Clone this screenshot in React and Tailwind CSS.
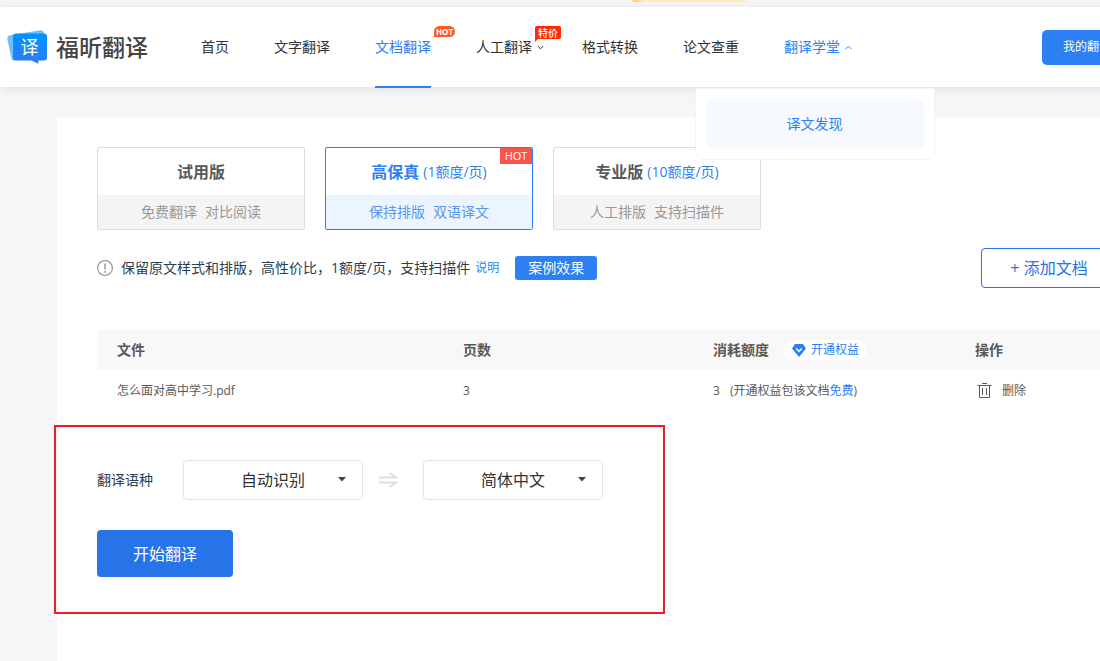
import { useState } from 'react';

const NAV = [
  { label: '首页' },
  { label: '文字翻译' },
  { label: '文档翻译', active: true, badge: 'hot' },
  { label: '人工翻译', arrow: 'down', badge: 'sale' },
  { label: '格式转换' },
  { label: '论文查重' },
  { label: '翻译学堂', arrow: 'up', menu: ['译文发现'] },
];

const PLANS = [
  { id: 'trial', name: '试用版', tags: ['免费翻译', '对比阅读'] },
  { id: 'hifi', name: '高保真', price: '(1额度/页)', tags: ['保持排版', '双语译文'], hot: true },
  { id: 'pro', name: '专业版', price: '(10额度/页)', tags: ['人工排版', '支持扫描件'] },
];

const FILES = [{ name: '怎么面对高中学习.pdf', pages: 3, cost: 3 }];

function Logo() {
  return (
    <a href="#" className="flex w-[201px] shrink-0 items-center gap-2 pl-[7px]">
      <svg width="41" height="36" viewBox="0 0 41 36" className="shrink-0">
        <defs>
          <linearGradient id="logo-front" x1="0" y1="0" x2="0" y2="1">
            <stop offset="0" stopColor="#0092ff" />
            <stop offset="1" stopColor="#2d7cf6" />
          </linearGradient>
        </defs>
        <path d="M3 6.2 33.5 1.2Q36 1 36.8 3.5L38 10 8 31.6Q5 31.6 4.4 29L.3 10Q0 7 3 6.2Z" fill="#74bdfb" />
        <path
          d="M9 4.5H37Q40 4.5 40 7.5V28.5Q40 31.5 37 31.5H31.3V34.8L24.5 31.5H9Q6 31.5 6 28.5V7.5Q6 4.5 9 4.5Z"
          fill="url(#logo-front)"
        />
        <text x="22.5" y="25" textAnchor="middle" fontSize="18" fill="#fff">译</text>
      </svg>
      <span className="text-[23px] leading-8 font-medium text-[#444]">福昕翻译</span>
    </a>
  );
}

function NavArrow({ dir }) {
  return (
    <svg width="7" height="5" viewBox="0 0 7 5" fill="none" stroke="currentColor" className="ml-[5px] -mr-[7px] shrink-0">
      <path d={dir === 'up' ? 'M.7 4 3.5 1.2 6.3 4' : 'M.7 1 3.5 3.8 6.3 1'} />
    </svg>
  );
}

function NavBadge({ type }) {
  if (type === 'hot') {
    return (
      <span className="absolute top-[19px] left-[59px] flex h-[11px] w-[21px] items-center justify-center rounded-t-md rounded-br-md bg-[#ff5a1f] text-[8px] leading-none font-bold text-white">
        HOT
      </span>
    );
  }
  return (
    <span className="absolute top-[19px] left-[59px] flex h-[13px] w-[26px] items-center justify-center rounded-xs bg-[#ff2a00] text-[10px] leading-none font-medium whitespace-nowrap text-white">
      特价
      <svg width="4" height="4" className="absolute top-full left-0 -mt-px">
        <path d="M0 0H4L0 4Z" fill="#ff2a00" />
      </svg>
    </span>
  );
}

function NavItem({ item }) {
  const blue = item.active || item.menu;
  return (
    <li className="relative shrink-0">
      <a href="#" className={`flex h-20 items-center text-sm ${blue ? 'text-[#2d7ff4]' : 'text-[#333]'}`}>
        {item.label}
        {item.arrow && <NavArrow dir={item.arrow} />}
      </a>
      {item.badge && <NavBadge type={item.badge} />}
      {item.active && <span className="absolute inset-x-0 -bottom-px h-0.5 bg-[#2d7ff4]" />}
      {item.menu && (
        <div className="absolute top-full left-1/2 mt-px w-[240px] -translate-x-1/2 rounded-b-[10px] border border-[#f2f2f2] bg-white p-2.5">
          {item.menu.map((m) => (
            <a key={m} href="#" className="flex h-[50px] items-center justify-center rounded-[5px] bg-[#f6fafe] text-sm text-[#2d7ff4]">
              {m}
            </a>
          ))}
        </div>
      )}
    </li>
  );
}

function PlanCard({ plan, selected, onSelect }) {
  return (
    <button
      type="button"
      onClick={onSelect}
      className={`relative w-52 shrink-0 cursor-pointer overflow-hidden rounded-[2px] border ${selected ? 'border-[#2d7ff4]' : 'border-[#dcdcdc]'}`}
    >
      <span className="flex h-[47px] items-center justify-center gap-1">
        <span className={`text-base font-bold ${selected ? 'text-[#2d7ff4]' : 'text-[#595959]'}`}>{plan.name}</span>
        {plan.price && <span className="text-sm text-[#2d7ff4]">{plan.price}</span>}
      </span>
      <span
        className={`flex h-[34px] items-center justify-center gap-2 text-sm ${selected ? 'bg-[#ecf4ff] text-[#5c96ec]' : 'bg-[#f4f4f4] text-[#999]'}`}
      >
        {plan.tags.map((tag) => (
          <span key={tag}>{tag}</span>
        ))}
      </span>
      {plan.hot && (
        <span className="absolute top-0 right-0 flex h-4 w-8 items-center justify-center bg-[#f9544b] text-[11px] text-white">HOT</span>
      )}
    </button>
  );
}

function LangSelect({ label, value, onChange, options }) {
  return (
    <div className="relative">
      <select
        aria-label={label}
        value={value}
        onChange={(e) => onChange(e.target.value)}
        className="h-10 w-[180px] appearance-none rounded border border-[#e3e3e3] bg-white text-center text-base text-[#333] [text-align-last:center]"
      >
        {options.map((o) => (
          <option key={o}>{o}</option>
        ))}
      </select>
      <svg width="8" height="5" className="pointer-events-none absolute top-[17px] right-[17px]">
        <path d="M0 0H8L4 4.5Z" fill="#444" />
      </svg>
    </div>
  );
}

export default function App() {
  const [plan, setPlan] = useState('hifi');
  const [from, setFrom] = useState('自动识别');
  const [to, setTo] = useState('简体中文');

  return (
    <div className="flex min-h-screen flex-col overflow-x-clip bg-[#f6f6f6] font-['Open_Sans','Noto_Sans_CJK_SC',sans-serif]">
      <div className="h-[7px] shrink-0">
        <div className="ml-[632px] h-0.5 w-[114px] rounded-bl-sm bg-linear-to-r from-[#ffd670] from-5% to-[#ffedbd] to-10%" />
      </div>

      <header className="relative z-10 flex h-20 min-w-[1132px] items-center bg-white shadow-[0_2px_10px_rgba(0,0,0,0.09)]">
        <Logo />
        <nav>
          <ul className="flex gap-[45px]">
            {NAV.map((item) => (
              <NavItem key={item.label} item={item} />
            ))}
          </ul>
        </nav>
        <button type="button" className="ml-auto h-[35px] shrink-0 cursor-pointer rounded-[5px] bg-[#2d7ff4] px-[21px] text-xs text-white">
          我的翻译
        </button>
      </header>

      <main className="mt-[30px] ml-[57px] min-w-[1100px] grow bg-white px-10 pt-[30px]">
        <div className="flex gap-5">
          {PLANS.map((p) => (
            <PlanCard key={p.id} plan={p} selected={plan === p.id} onSelect={() => setPlan(p.id)} />
          ))}
        </div>

        <div className="mt-[18px] flex items-center">
          <svg width="16" height="16" viewBox="0 0 16 16" fill="none" stroke="#999" className="shrink-0">
            <circle cx="8" cy="8" r="7.4" strokeWidth="1.2" />
            <path d="M8 3.5V9.5M8 11V12.8" strokeWidth="1.5" />
          </svg>
          <p className="ml-2 text-sm text-[#2c3e50]">保留原文样式和排版，高性价比，1额度/页，支持扫描件</p>
          <a href="#" className="ml-[5px] text-xs text-[#2d7ff4]">说明</a>
          <button type="button" className="ml-4 h-6 cursor-pointer rounded-[3px] bg-[#2d7ff4] px-[13px] text-sm text-white">
            案例效果
          </button>
          <button type="button" className="ml-auto h-10 w-[136px] cursor-pointer rounded border border-[#2674e8] text-base text-[#2674e8]">
            + 添加文档
          </button>
        </div>

        <table className="mt-[42px] w-full table-fixed text-left text-[#595959]">
          <colgroup>
            <col className="w-[346px]" />
            <col className="w-[250px]" />
            <col className="w-[262px]" />
            <col />
          </colgroup>
          <thead>
            <tr className="h-10 bg-[#f8f8f8] text-sm">
              <th className="pl-5 font-bold">文件</th>
              <th className="pl-5 font-bold">页数</th>
              <th className="pl-5 font-bold">
                <div className="flex items-center gap-[15px]">
                  消耗额度
                  <a href="#" className="flex h-5 items-center gap-[5px] rounded-full bg-white px-2 text-xs font-normal text-[#2d7ff4]">
                    <svg width="14" height="13" viewBox="0 0 14 13">
                      <path d="M3 0H11L14 4.5 7 13 0 4.5Z" fill="#2d7ff4" />
                      <path d="M4.3 4.5 7 7.5 9.7 4.5" fill="none" stroke="#fff" strokeWidth="1.5" />
                    </svg>
                    开通权益
                  </a>
                </div>
              </th>
              <th className="pl-5 font-bold">操作</th>
            </tr>
          </thead>
          <tbody>
            {FILES.map((f) => (
              <tr key={f.name} className="h-[42px] text-xs">
                <td className="pl-5">{f.name}</td>
                <td className="pl-5">{f.pages}</td>
                <td className="pl-5">
                  <span className="mr-2.5">{f.cost}</span>
                  <span>
                    (开通权益包该文档<a href="#" className="text-[#2d7ff4]">免费</a>)
                  </span>
                </td>
                <td className="pl-5">
                  <button type="button" className="flex cursor-pointer items-center gap-2.5 pl-0.5">
                    <svg width="15" height="16" viewBox="0 0 15 16" fill="none" stroke="#595959">
                      <path d="M.5 2.5H14.5M5 .5H10M2.5 2.5V14.5H12.5V2.5M5.5 5V12M9.5 5V12" />
                    </svg>
                    删除
                  </button>
                </td>
              </tr>
            ))}
          </tbody>
        </table>

        <section className="mt-[13px] -ml-[43px] w-[611px] border-2 border-[#ee1c25] px-[41px] pt-[33px] pb-[35px]">
          <div className="flex items-center">
            <span className="w-[86px] text-sm text-[#2c3e50]">翻译语种</span>
            <LangSelect label="源语言" value={from} onChange={setFrom} options={['自动识别', '英语', '日语']} />
            <span className="flex w-[60px] justify-center pr-2.5">
              <svg width="20" height="16" viewBox="0 0 20 16" fill="none" stroke="#dedede" strokeWidth="1.8">
                <path d="M1 5.5H18.5L11.5 1M1 10.5H18.5L11.5 15" />
              </svg>
            </span>
            <LangSelect label="目标语言" value={to} onChange={setTo} options={['简体中文', '英语', '日语']} />
          </div>
          <button type="button" className="mt-[30px] h-[47px] w-[136px] cursor-pointer rounded bg-[#2674e8] text-base text-white">
            开始翻译
          </button>
        </section>
      </main>
    </div>
  );
}
